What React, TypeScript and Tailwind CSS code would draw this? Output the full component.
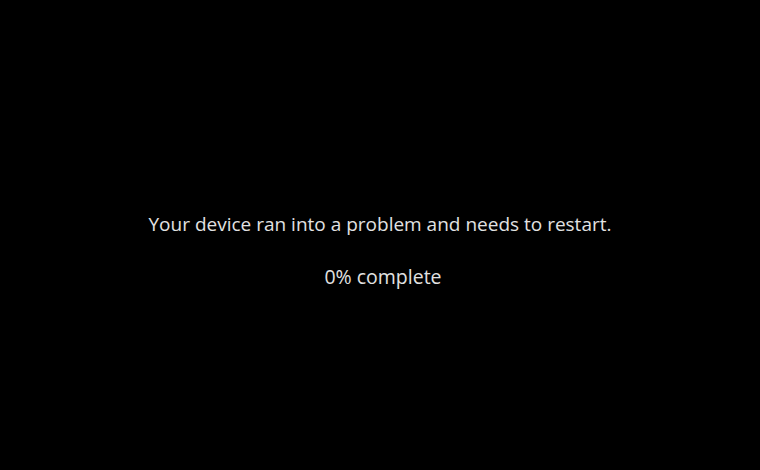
export default function App() {
  return (
    <div className="w-[760px] h-[470px] bg-black flex flex-col items-center pt-[210px] text-[#e2e2e2]" style={{ fontFamily: '"Open Sans", "Noto Sans", sans-serif' }}>
      <div className="text-[19px] leading-[28px]">Your device ran into a problem and needs to restart.</div>
      <div className="text-[19.5px] leading-[28px] mt-[25px] pl-[6px]">0% complete</div>
    </div>
  );
}
